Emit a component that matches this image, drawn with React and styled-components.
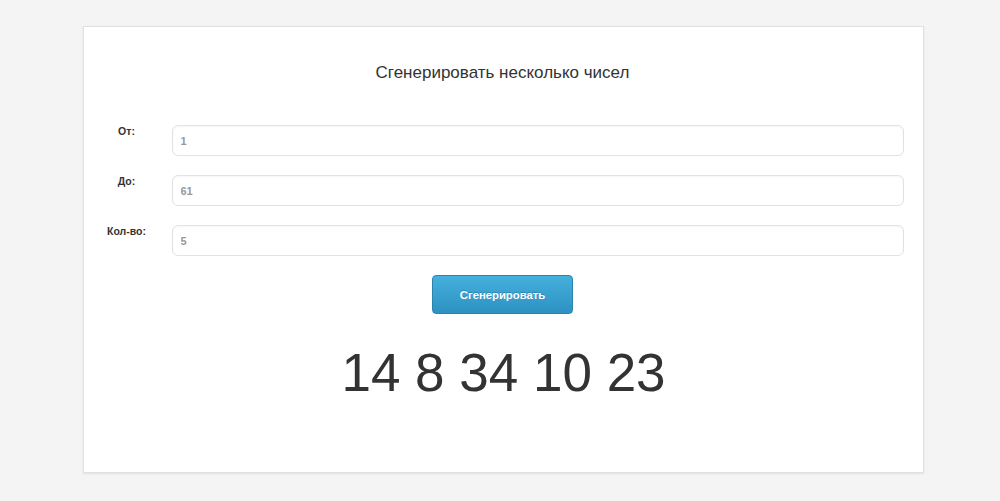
import React from 'react';
import styled, { createGlobalStyle } from 'styled-components';

const Global = createGlobalStyle`
  html, body {
    margin: 0;
    padding: 0;
    background: #f4f4f4;
    font-family: "Liberation Sans", Arial, sans-serif;
  }
`

const Page = styled.div`
  width: 1000px;
  height: 501px;
  padding-top: 26px;
  box-sizing: border-box;
  display: flex;
  justify-content: center;
`

const Card = styled.div`
  width: 841px;
  height: 447px;
  margin-left: 6px;
  box-sizing: border-box;
  background: #fff;
  border: 1px solid #e0e0e0;
  box-shadow: 0 1px 2px rgba(0,0,0,0.08);
  padding: 35px 19px 0 8px;
`

const Title = styled.h1`
  margin: 0 0 41px;
  text-align: center;
  font-size: 17px;
  font-weight: normal;
  color: #333;
  line-height: 22px;
  padding-left: 10px;
`

const Row = styled.div`
  display: flex;
  align-items: flex-start;
  margin-bottom: 19px;
`

const Label = styled.label`
  width: 80px;
  padding-right: 10px;
  box-sizing: border-box;
  text-align: center;
  font-size: 10.5px;
  font-weight: bold;
  color: #333;
`

const Input = styled.input`
  flex: 1;
  height: 31px;
  box-sizing: border-box;
  border: 1px solid #e2e2e2;
  border-radius: 6px;
  padding: 0 8px;
  font-family: inherit;
  font-size: 11px;
  font-weight: bold;
  color: #999;
  outline: none;
  box-shadow: inset 0 1px 2px rgba(0,0,0,0.04);
`

const Actions = styled.div`
  display: flex;
  justify-content: center;
  padding-left: 10px;
`

const Button = styled.button`
  width: 141px;
  height: 39px;
  border: 1px solid #2a84b0;
  border-radius: 4px;
  background: linear-gradient(#45b0dd, #2d91c2);
  color: #fff;
  font-family: inherit;
  font-size: 11.3px;
  font-weight: bold;
  text-shadow: 0 -1px 0 rgba(0,0,0,0.2);
  cursor: pointer;
`

const Result = styled.div`
  text-align: center;
  font-size: 53px;
  color: #333;
  margin-top: 27px;
  padding-left: 12px;
  line-height: 64px;
`

export default function App() {
  return (
    <>
      <Global />
      <Page>
        <Card>
          <Title>Сгенерировать несколько чисел</Title>
          <Row>
            <Label>От:</Label>
            <Input defaultValue="1" />
          </Row>
          <Row>
            <Label>До:</Label>
            <Input defaultValue="61" />
          </Row>
          <Row>
            <Label>Кол-во:</Label>
            <Input defaultValue="5" />
          </Row>
          <Actions>
            <Button>Сгенерировать</Button>
          </Actions>
          <Result>14 8 34 10 23</Result>
        </Card>
      </Page>
    </>
  );
}
